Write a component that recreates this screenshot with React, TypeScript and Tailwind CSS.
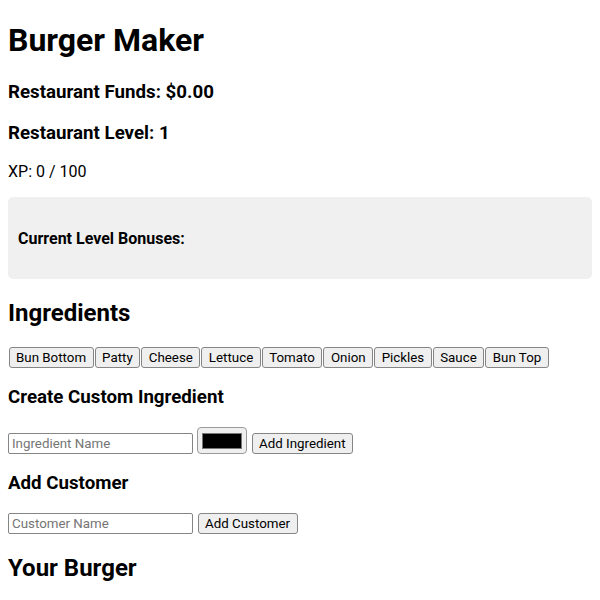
import React from "react";

const ingredients = [
  "Bun Bottom",
  "Patty",
  "Cheese",
  "Lettuce",
  "Tomato",
  "Onion",
  "Pickles",
  "Sauce",
  "Bun Top",
];

function NativeButton({ children }: { children: React.ReactNode }) {
  return (
    <button className="mx-[0.5px] px-[6.5px] py-[2px] border border-[#858585] rounded-[3px] bg-[#efefef] text-[13.333px] leading-[normal] text-black font-['Roboto',sans-serif] whitespace-nowrap">
      {children}
    </button>
  );
}

function TextInput({ placeholder }: { placeholder: string }) {
  return (
    <input
      type="text"
      placeholder={placeholder}
      className="w-[185px] px-[3px] py-[2px] border border-[#858585] rounded-[2px] bg-white text-[13.333px] leading-[normal] text-black placeholder:text-[#757575] font-['Roboto',sans-serif]"
    />
  );
}

export default function App() {
  return (
    <div className="mx-2 font-['Roboto',sans-serif] text-base leading-[normal] text-black bg-white">
      <h1 className="text-[32px] font-bold leading-[normal] pt-[21.44px] mb-[21.44px]">
        Burger Maker
      </h1>
      <h3 className="text-[18.72px] font-bold leading-[normal] my-[18.72px]">
        Restaurant Funds: $0.00
      </h3>
      <h3 className="text-[18.72px] font-bold leading-[normal] my-[18.72px]">
        Restaurant Level: 1
      </h3>
      <p className="my-4 leading-[normal]">XP: 0 / 100</p>

      <div className="bg-[#f0f0f0] rounded-[5px] p-[10px]">
        <h4 className="text-base font-bold leading-[normal] my-[21.28px]">
          Current Level Bonuses:
        </h4>
      </div>

      <h2 className="text-2xl font-bold leading-[normal] my-[19.92px]">
        Ingredients
      </h2>
      <div className="flex">
        {ingredients.map((name) => (
          <NativeButton key={name}>{name}</NativeButton>
        ))}
      </div>

      <h3 className="text-[18.72px] font-bold leading-[normal] my-[18.72px]">
        Create Custom Ingredient
      </h3>
      <div className="flex items-end gap-1">
        <TextInput placeholder="Ingredient Name" />
        <button className="w-[50px] h-[27px] border border-[#9a9a9a] rounded-[4px] bg-[#efefef] flex items-center justify-center mb-[-0.5px]">
          <span className="block w-[40px] h-[16px] bg-black border border-[#777777]" />
        </button>
        <NativeButton>Add Ingredient</NativeButton>
      </div>

      <h3 className="text-[18.72px] font-bold leading-[normal] my-[18.72px]">
        Add Customer
      </h3>
      <div className="flex items-end gap-1">
        <TextInput placeholder="Customer Name" />
        <NativeButton>Add Customer</NativeButton>
      </div>

      <h2 className="text-2xl font-bold leading-[normal] my-[19.92px]">
        Your Burger
      </h2>
    </div>
  );
}
